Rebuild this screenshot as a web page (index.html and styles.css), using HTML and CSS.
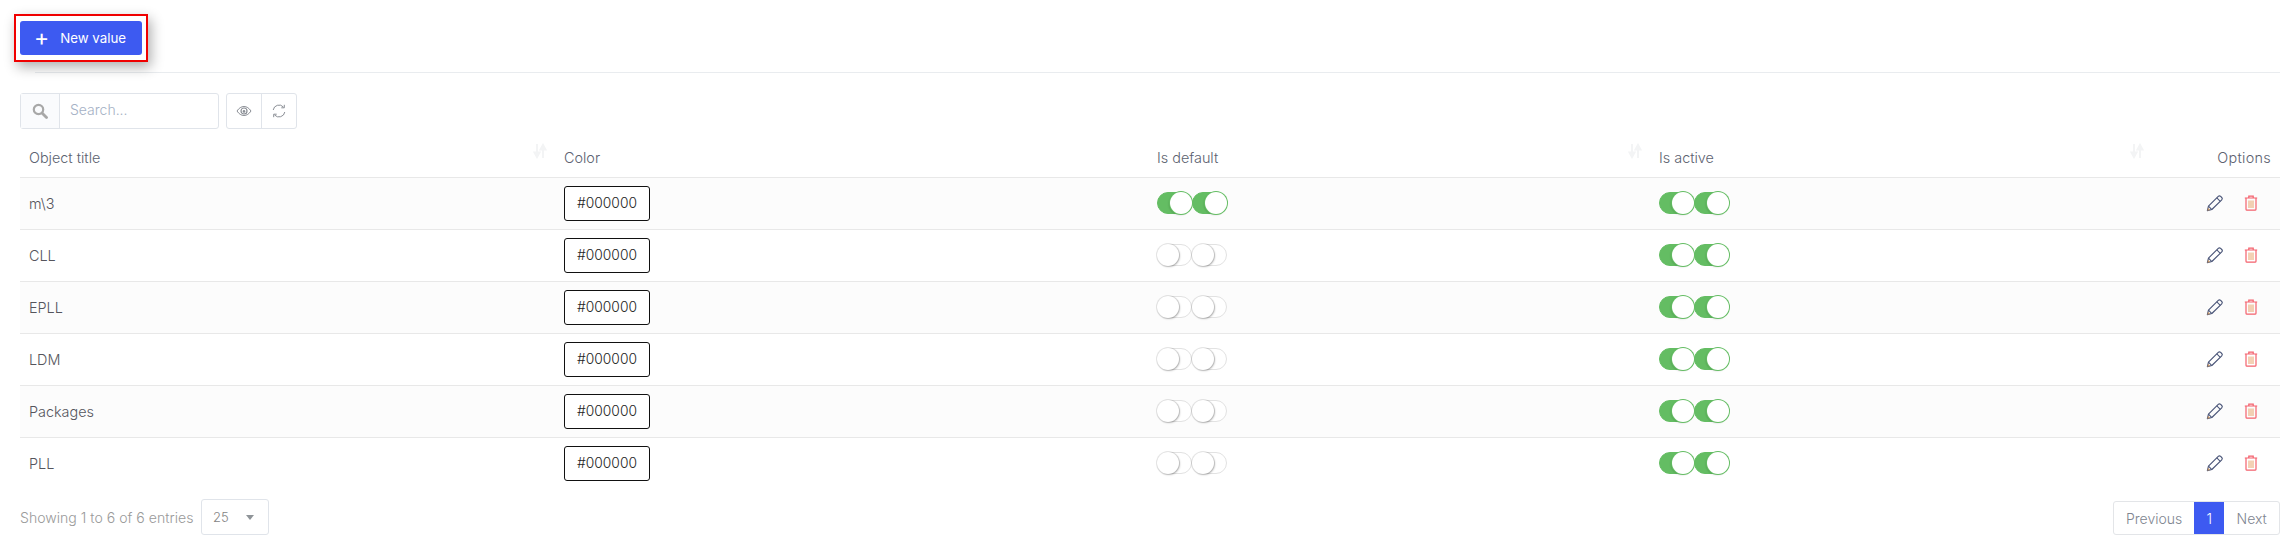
FILE: index.html
```html
<!DOCTYPE html>
<html lang="en">
<head>
<meta charset="utf-8">
<title>Values</title>
<link rel="stylesheet" href="styles.css">
</head>
<body>
<svg class="defs" width="0" height="0" aria-hidden="true">
  <symbol id="i-pencil" viewBox="0 0 16 16"><path d="M1.200 14.800l1-4L10.900 2.100a1.500 1.500 0 0 1 2.100 0l1 1a1.500 1.500 0 0 1 0 2.100L5.200 13.800z" fill="none" stroke="#4a5578" stroke-width="1" stroke-linejoin="round"/><path d="M9.600 3.400l3.100 3.100M2.200 10.800l3 3" fill="none" stroke="#4a5578" stroke-width=".9"/><path d="M1.200 14.800l.6-2.500 1.900 1.900z" fill="#c89a6a"/></symbol>
  <symbol id="i-trash" viewBox="0 0 14 16"><path d="M.8 3h12.400M4.800 3V1.200h4.400V3M2 3v11.200c0 .6.400 1 1 1h8c.6 0 1-.4 1-1V3" fill="none" stroke="#f4606c" stroke-width="1.200"/><path d="M5 5.500v7.500M7 5.500v7.500M9 5.500v7.500" fill="none" stroke="#e8a36a" stroke-width="1"/></symbol>
  <symbol id="i-sort" viewBox="0 0 14 16"><path d="M4 1v11M1.500 9.500L4 14l2.500-4.500zM10 15V4M7.500 6.500L10 2l2.500 4.500z" fill="#f3f4f5" stroke="#f3f4f5" stroke-width="2"/></symbol>
</svg>

<main class="page">
  <div class="top">
    <div class="highlight">
      <button class="new-btn" type="button"><span class="plus">+</span><span>New value</span></button>
    </div>
  </div>
  <hr class="rule">

  <div class="toolbar">
    <div class="search">
      <span class="search-addon">
        <svg width="16" height="16" viewBox="0 0 16 16"><circle cx="6.500" cy="6.500" r="4.700" fill="none" stroke="#a8a8a8" stroke-width="2.200"/><path d="M10 10l4.500 4.500" stroke="#a8a8a8" stroke-width="2.800" stroke-linecap="round"/></svg>
      </span>
      <span class="search-input">Search...</span>
    </div>
    <div class="btn-group">
      <span class="tool-btn">
        <svg width="16" height="12" viewBox="0 0 16 12"><path d="M1 6c2-3 4.300-4.500 7-4.500S13 3 15 6c-2 3-4.300 4.500-7 4.500S3 9 1 6z" fill="none" stroke="#8b8f96" stroke-width="1"/><circle cx="8" cy="6" r="3" fill="none" stroke="#8b8f96" stroke-width="1.200"/><circle cx="8" cy="6.400" r="1.300" fill="#8b8f96"/></svg>
      </span>
      <span class="tool-btn">
        <svg width="14" height="14" viewBox="0 0 14 14"><path d="M1.200 6A5.900 5.900 0 0 1 11.400 3M12.800 8A5.900 5.900 0 0 1 2.600 11" fill="none" stroke="#8b8f96" stroke-width="1"/><path d="M12.300.8v3h-3M1.700 13.200v-3h3" fill="none" stroke="#8b8f96" stroke-width="1"/></svg>
      </span>
    </div>
  </div>

  <table class="grid">
    <colgroup>
      <col class="col-title"><col class="col-color"><col class="col-default"><col class="col-active"><col class="col-options">
    </colgroup>
    <thead>
      <tr>
        <th>Object title<svg class="sort" width="14" height="16"><use href="#i-sort"/></svg></th>
        <th>Color</th>
        <th>Is default<svg class="sort" width="14" height="16"><use href="#i-sort"/></svg></th>
        <th>Is active<svg class="sort" width="14" height="16"><use href="#i-sort"/></svg></th>
        <th class="opt-head">Options</th>
      </tr>
    </thead>
    <tbody>
      <tr>
        <td>m\3</td>
        <td><span class="swatch">#000000</span></td>
        <td><span class="pair"><span class="toggle on"></span><span class="toggle on"></span></span></td>
        <td><span class="pair"><span class="toggle on"></span><span class="toggle on"></span></span></td>
        <td><span class="actions"><svg width="18" height="18"><use href="#i-pencil"/></svg><svg width="14" height="16"><use href="#i-trash"/></svg></span></td>
      </tr>
      <tr>
        <td>CLL</td>
        <td><span class="swatch">#000000</span></td>
        <td><span class="pair"><span class="toggle"></span><span class="toggle"></span></span></td>
        <td><span class="pair"><span class="toggle on"></span><span class="toggle on"></span></span></td>
        <td><span class="actions"><svg width="18" height="18"><use href="#i-pencil"/></svg><svg width="14" height="16"><use href="#i-trash"/></svg></span></td>
      </tr>
      <tr>
        <td>EPLL</td>
        <td><span class="swatch">#000000</span></td>
        <td><span class="pair"><span class="toggle"></span><span class="toggle"></span></span></td>
        <td><span class="pair"><span class="toggle on"></span><span class="toggle on"></span></span></td>
        <td><span class="actions"><svg width="18" height="18"><use href="#i-pencil"/></svg><svg width="14" height="16"><use href="#i-trash"/></svg></span></td>
      </tr>
      <tr>
        <td>LDM</td>
        <td><span class="swatch">#000000</span></td>
        <td><span class="pair"><span class="toggle"></span><span class="toggle"></span></span></td>
        <td><span class="pair"><span class="toggle on"></span><span class="toggle on"></span></span></td>
        <td><span class="actions"><svg width="18" height="18"><use href="#i-pencil"/></svg><svg width="14" height="16"><use href="#i-trash"/></svg></span></td>
      </tr>
      <tr>
        <td>Packages</td>
        <td><span class="swatch">#000000</span></td>
        <td><span class="pair"><span class="toggle"></span><span class="toggle"></span></span></td>
        <td><span class="pair"><span class="toggle on"></span><span class="toggle on"></span></span></td>
        <td><span class="actions"><svg width="18" height="18"><use href="#i-pencil"/></svg><svg width="14" height="16"><use href="#i-trash"/></svg></span></td>
      </tr>
      <tr>
        <td>PLL</td>
        <td><span class="swatch">#000000</span></td>
        <td><span class="pair"><span class="toggle"></span><span class="toggle"></span></span></td>
        <td><span class="pair"><span class="toggle on"></span><span class="toggle on"></span></span></td>
        <td><span class="actions"><svg width="18" height="18"><use href="#i-pencil"/></svg><svg width="14" height="16"><use href="#i-trash"/></svg></span></td>
      </tr>
    </tbody>
  </table>

  <footer class="foot">
    <div class="foot-left">
      <span class="info">Showing 1 to 6 of 6 entries</span>
      <span class="select"><span>25</span><span class="caret"></span></span>
    </div>
    <nav class="pager">
      <span class="page-link">Previous</span>
      <span class="page-link current">1</span>
      <span class="page-link">Next</span>
    </nav>
  </footer>
</main>
</body>
</html>
```
FILE: styles.css
```css
* { box-sizing: border-box; }
html, body { margin: 0; background: #fff; }
body {
  font-family: "Inter", "Open Sans", "Liberation Sans", sans-serif;
  font-size: 14.400px;
  font-weight: 300;
  color: #5f6368;
  height: 554px;
  overflow: hidden;
}
.defs { display: block; height: 0; }
.page { padding: 14px 4px 0 20px; }

.top { margin-left: -6px; display: flex; }
.highlight {
  width: 134px;
  height: 48px;
  border: 2px solid #f00000;
  padding: 5px 4px;
  box-shadow: 3px 5px 12px rgba(0, 0, 0, .32);
  display: flex;
}
.new-btn {
  flex: 1;
  border: 0;
  border-radius: 3px;
  background: #3d5af1;
  color: #fff;
  font: 400 13.300px "Inter", sans-serif;
  display: flex;
  align-items: center;
  padding: 0 0 0 14px;
  gap: 11px;
}
.plus { font-size: 23px; font-weight: 400; line-height: 20px; }
.rule { border: 0; border-top: 1px solid #e9ecef; margin: 10px 0 20px 15px; height: 0; }

.toolbar { display: flex; gap: 7px; height: 36px; }
.search { display: flex; width: 199px; border: 1px solid #e0e4ea; border-radius: 3px; }
.search-addon {
  width: 39px;
  display: flex;
  align-items: center;
  justify-content: center;
  background: #fafbfd;
  border-right: 1px solid #e0e4ea;
}
.search-input { flex: 1; padding-left: 10px; color: #a5b1c5; line-height: 32px; font-size: 14px; }
.btn-group { display: flex; width: 71px; border: 1px solid #e0e4ea; border-radius: 3px; }
.tool-btn { flex: 1; display: flex; align-items: center; justify-content: center; }
.tool-btn + .tool-btn { border-left: 1px solid #e0e4ea; }

.grid { width: 100%; table-layout: fixed; border-collapse: collapse; }
.col-title { width: 535px; }
.col-color { width: 593px; }
.col-default { width: 502px; }
.col-active { width: 502px; }
.col-options { width: 128px; }
.grid th {
  position: relative;
  height: 48px;
  padding: 10px 9px 0;
  text-align: left;
  font-weight: 300;
  color: #5c6270;
  border-bottom: 1px solid #e8e8e8;
}
.grid th.opt-head { text-align: right; letter-spacing: .3px; }
.sort { position: absolute; right: 8px; top: 14px; }
.grid td { height: 52px; padding: 0 9px; border-bottom: 1px solid #e8e8e8; color: #55555c; vertical-align: middle; }
.grid tbody tr:nth-child(odd) { background: #fcfcfc; }
.grid tbody tr:last-child td { border-bottom: 0; }

.swatch {
  display: inline-flex;
  align-items: center;
  justify-content: center;
  width: 86px;
  height: 35px;
  border: 1px solid #111;
  border-radius: 3px;
  background: #fff;
  color: #222;
  font-size: 13.800px;
}
.pair { display: flex; }
.toggle {
  position: relative;
  width: 35px;
  height: 22px;
  border-radius: 11px;
  background: #fff;
  border: 1px solid #e2e2e2;
}
.toggle::after {
  content: "";
  position: absolute;
  left: -1px;
  top: -1px;
  width: 22px;
  height: 22px;
  border-radius: 50%;
  background: #fff;
  box-shadow: 0 0 0 1px rgba(0, 0, 0, .1), 1px 1px 2px rgba(0, 0, 0, .22);
}
.toggle.on { background: #64bd63; border-color: #64bd63; }
.toggle.on::after { left: auto; right: -1px; box-shadow: 0 0 0 1px #64bd63, -1px 1px 2px rgba(0, 0, 0, .2); }
.actions { display: flex; justify-content: flex-end; align-items: center; gap: 20px; padding-right: 13px; }

.foot { display: flex; justify-content: space-between; align-items: flex-start; margin-top: 10px; }
.foot-left { display: flex; align-items: center; gap: 5px; }
.info { color: #9a9a9a; font-size: 14.100px; width: 176px; white-space: nowrap; }
.select {
  width: 68px;
  height: 36px;
  border: 1px solid #e0e4ea;
  border-radius: 3px;
  display: flex;
  align-items: center;
  justify-content: space-between;
  padding: 0 14px 0 11px;
  color: #858585;
  font-size: 13px;
}
.caret { width: 0; height: 0; border-left: 4px solid transparent; border-right: 4px solid transparent; border-top: 5px solid #8f9498; }
.pager {
  display: flex;
  height: 34px;
  margin-top: 2px;
  border: 1px solid #e3e5e8;
  border-radius: 3px;
  width: 167px;
}
.page-link { display: flex; align-items: center; justify-content: center; padding: 0 12px; color: #808590; font-size: 14px; flex: 1; }
.page-link.current { flex: 0 0 30px; padding: 0; background: #3d5af1; color: #fff; }
```
